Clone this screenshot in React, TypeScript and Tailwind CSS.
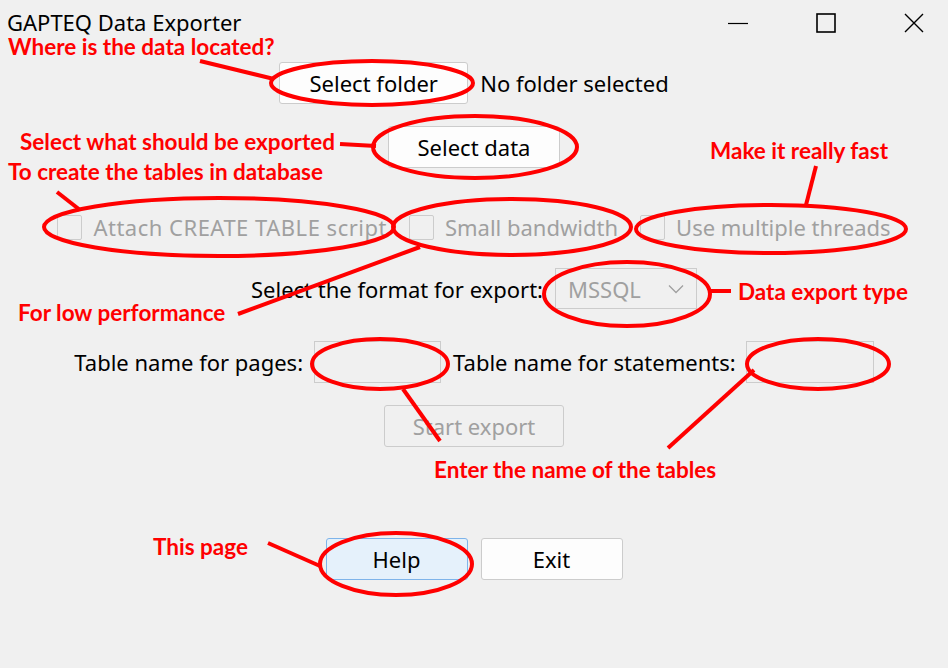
import React from 'react'

const ui = { fontFamily: '"Noto Sans", "Open Sans", sans-serif' }
const note = { fontFamily: 'Lato, "Noto Sans", sans-serif' }

function Btn({ label, w, variant = 'normal' }: { label: string; w: string; variant?: 'normal' | 'focus' | 'disabled' }) {
  const cls =
    variant === 'focus'
      ? 'bg-[#e5f1fb] border-[#7eb4ea] text-black'
      : variant === 'disabled'
        ? 'bg-[#f0f0f0] border-[#cccccc] text-[#a0a0a0]'
        : 'bg-[#fdfdfd] border-[#cccccc] text-black'
  return (
    <button className={`${w} h-[42px] border rounded-[3px] text-[22px] leading-[28px] flex items-center justify-center ${cls}`}>
      {label}
    </button>
  )
}

function Check({ label, wide }: { label: string; wide?: boolean }) {
  return (
    <label className={`flex items-center gap-[11px] text-[22px] leading-[28px] text-[#a0a0a0] ${wide ? 'tracking-[0.5px]' : ''}`}>
      <span className="w-[25px] h-[25px] border border-[#cccccc] rounded-[2px] bg-[#f0f0f0]" />
      {label}
    </label>
  )
}

function Notes() {
  const s = { fill: 'none', stroke: '#ff0000', strokeWidth: 4 }
  return (
    <svg className="absolute inset-0 pointer-events-none" width="948" height="668">
      <ellipse cx="372" cy="83" rx="101" ry="22" {...s} />
      <ellipse cx="475" cy="147" rx="102" ry="31" {...s} />
      <ellipse cx="219" cy="227" rx="175" ry="29" {...s} />
      <ellipse cx="512" cy="227" rx="119" ry="28" {...s} />
      <ellipse cx="771" cy="229" rx="135" ry="24" {...s} />
      <ellipse cx="627" cy="294" rx="83" ry="32" {...s} />
      <ellipse cx="380" cy="364" rx="68" ry="25" {...s} />
      <ellipse cx="818" cy="364" rx="71" ry="25" {...s} />
      <ellipse cx="396" cy="564" rx="76" ry="31" {...s} />
      <line x1="200" y1="61" x2="274" y2="79" {...s} />
      <line x1="340" y1="144" x2="376" y2="146" {...s} />
      <line x1="57" y1="192" x2="80" y2="210" {...s} />
      <line x1="420" y1="247" x2="238" y2="314" {...s} />
      <line x1="816" y1="166" x2="806" y2="205" {...s} />
      <line x1="711" y1="291" x2="731" y2="291" {...s} />
      <line x1="403" y1="389" x2="440" y2="441" {...s} />
      <line x1="754" y1="370" x2="668" y2="448" {...s} />
      <line x1="268" y1="543" x2="320" y2="566" {...s} />
    </svg>
  )
}

const labels: [string, string][] = [
  ['Where is the data located?', 'left-[8px] top-[36px]'],
  ['Select what should be exported', 'left-[20px] top-[131px]'],
  ['To create the tables in database', 'left-[8px] top-[161px]'],
  ['Make it really fast', 'left-[710px] top-[140px]'],
  ['For low performance', 'left-[18px] top-[302px]'],
  ['Data export type', 'left-[738px] top-[281px]'],
  ['Enter the name of the tables', 'left-[434px] top-[459px]'],
  ['This page', 'left-[153px] top-[536px]'],
]

export default function App() {
  return (
    <div className="relative w-[948px] h-[668px] overflow-hidden bg-[#f0f0f0] text-black" style={ui}>
      <div className="h-[46px] flex items-center pl-[7px] pr-[24px]">
        <span className="text-[22px] leading-[20px] -mt-[3px]">GAPTEQ Data Exporter</span>
        <div className="ml-auto flex items-center gap-[68px]">
          <svg width="20" height="20" viewBox="0 0 20 20">
            <line x1="0" y1="10.5" x2="20" y2="10.5" stroke="#000" strokeWidth="1.2" />
          </svg>
          <svg width="20" height="20" viewBox="0 0 20 20">
            <rect x="1" y="1" width="18" height="18" fill="none" stroke="#000" strokeWidth="1.6" />
          </svg>
          <svg width="20" height="20" viewBox="0 0 20 20">
            <path d="M1 1 L19 19 M19 1 L1 19" stroke="#000" strokeWidth="1.4" />
          </svg>
        </div>
      </div>

      <div className="flex flex-col items-center">
        <div className="mt-[16px] flex items-center gap-[12px]">
          <Btn label="Select folder" w="w-[189px]" />
          <span className="text-[22px] leading-[28px]">No folder selected</span>
        </div>

        <div className="mt-[22px]">
          <Btn label="Select data" w="w-[172px]" />
        </div>

        <div className="mt-[45px] flex items-center gap-[22px]">
          <Check label="Attach CREATE TABLE script" wide />
          <Check label="Small bandwidth" />
          <Check label="Use multiple threads" />
        </div>

        <div className="mt-[27px] flex items-center gap-[12px]">
          <span className="text-[22px] leading-[28px]">Select the format for export:</span>
          <div className="w-[142px] h-[41px] border border-[#cccccc] flex items-center pl-[12px] pr-[12px] text-[22px] leading-[28px] text-[#a0a0a0]">
            MSSQL
            <svg className="ml-auto" width="16" height="10" viewBox="0 0 16 10">
              <path d="M1 1.5 L8 8.5 L15 1.5" fill="none" stroke="#a0a0a0" strokeWidth="1.3" />
            </svg>
          </div>
        </div>

        <div className="mt-[32px] flex items-center">
          <span className="text-[22px] leading-[28px]">Table name for pages:</span>
          <span className="ml-[11px] w-[127px] h-[42px] border border-[#cccccc]" />
          <span className="ml-[12px] text-[22px] leading-[28px]">Table name for statements:</span>
          <span className="ml-[10px] w-[128px] h-[42px] border border-[#cccccc]" />
        </div>

        <div className="mt-[22px]">
          <Btn label="Start export" w="w-[180px]" variant="disabled" />
        </div>

        <div className="mt-[91px] flex items-center gap-[13px]">
          <Btn label="Help" w="w-[142px]" variant="focus" />
          <Btn label="Exit" w="w-[142px]" />
        </div>
      </div>

      <Notes />
      {labels.map(([t, pos]) => (
        <span key={t} className={`absolute ${pos} h-[22px] leading-[22px] text-[22.5px] font-bold text-[#ff0000] whitespace-nowrap`} style={note}>
          {t}
        </span>
      ))}
    </div>
  )
}
